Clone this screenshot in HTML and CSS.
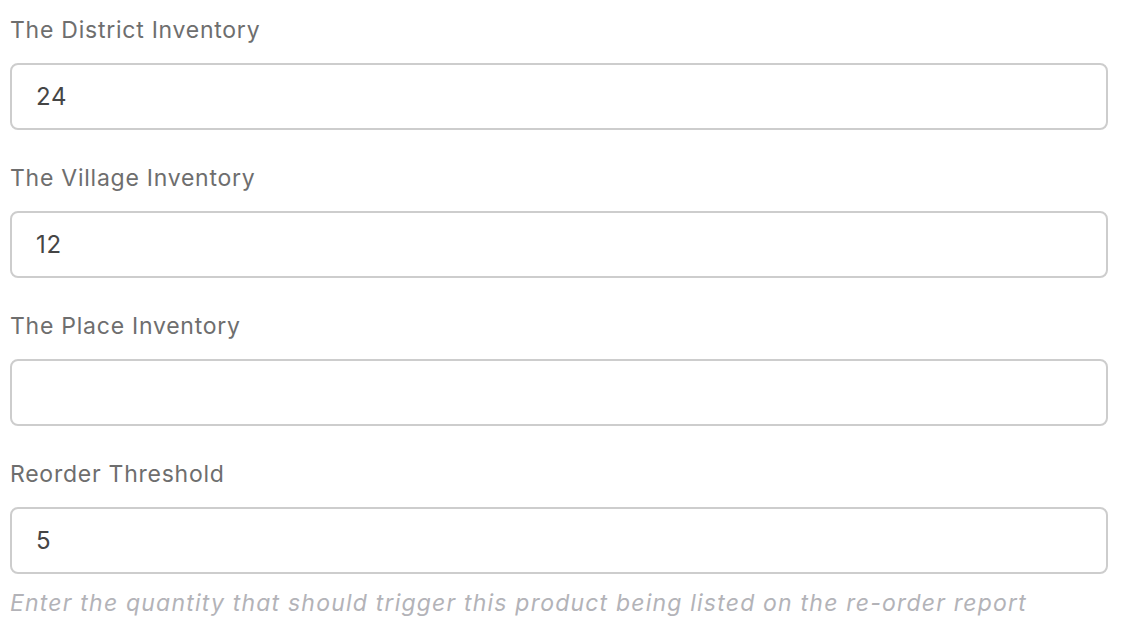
FILE: index.html
```html
<!DOCTYPE html>
<html>
<head>
<meta charset="utf-8">
<link rel="stylesheet" href="styles.css">
</head>
<body>
<form class="form">
  <div class="group">
    <label class="label">The District Inventory</label>
    <input class="input" type="text" value="24">
  </div>
  <div class="group">
    <label class="label">The Village Inventory</label>
    <input class="input" type="text" value="12">
  </div>
  <div class="group">
    <label class="label">The Place Inventory</label>
    <input class="input" type="text" value="">
  </div>
  <div class="group">
    <label class="label">Reorder Threshold</label>
    <input class="input" type="text" value="5">
    <p class="help">Enter the quantity that should trigger this product being listed on the re-order report</p>
  </div>
</form>
</body>
</html>
```
FILE: styles.css
```css
html, body {
  margin: 0;
  padding: 0;
  background: #fff;
}
.form {
  display: flex;
  flex-direction: column;
  gap: 33px;
  padding: 15px 15px 0 10px;
  font-family: Inter, "Open Sans", sans-serif;
}
.group {
  display: flex;
  flex-direction: column;
}
.label {
  font-size: 23px;
  line-height: 30px;
  letter-spacing: 0.75px;
  color: #6e6e6e;
  margin-bottom: 18px;
}
.input {
  box-sizing: border-box;
  width: 1098px;
  height: 67px;
  border: 2px solid #cdcdcd;
  border-radius: 8px;
  padding: 0 24px;
  font-family: inherit;
  font-size: 24px;
  letter-spacing: 0.8px;
  color: #454545;
  background: #fff;
  outline: none;
}
.help {
  margin: 14px 0 0;
  font-size: 23px;
  line-height: 30px;
  letter-spacing: 1.2px;
  font-style: italic;
  color: #b3b3b8;
}
```
